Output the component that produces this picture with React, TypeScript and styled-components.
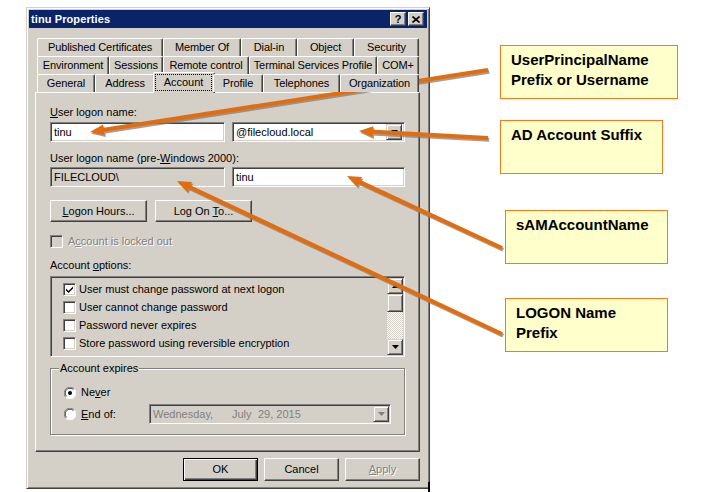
import React from "react";
import styled, { createGlobalStyle } from "styled-components";

const FACE = "#d4d0c8";
const SHADOW = "#808080";
const DARK = "#404040";

const Global = createGlobalStyle`
  html, body { margin: 0; padding: 0; background: #fff; }
  body { width: 718px; height: 492px; overflow: hidden; font-family: "Liberation Sans", Arial, sans-serif; }
  * { box-sizing: border-box; }
`;

const Page = styled.div`
  position: relative;
  width: 718px;
  height: 492px;
  display: flex;
  align-items: flex-start;
`;

const Window = styled.div`
  margin: 7px 0 0 26px;
  width: 404px;
  height: 482px;
  background: ${FACE};
  border: 1px solid;
  border-color: ${FACE} ${DARK} ${DARK} ${FACE};
  box-shadow: inset 1px 1px #fff, inset -1px -1px ${SHADOW};
  padding: 2px;
  display: flex;
  flex-direction: column;
  font: 11px "Liberation Sans", Arial, sans-serif;
  color: #000;
`;

const TitleBar = styled.div`
  height: 18px;
  background: #0a246a;
  color: #fff;
  display: flex;
  align-items: center;
  padding: 0 3px 0 2px;
`;

const TitleText = styled.div`
  flex: 1;
  font-weight: bold;
  font-size: 11px;
  letter-spacing: 0.1px;
`;

const CaptionButton = styled.div<{ $gap?: number }>`
  width: 16px;
  height: 14px;
  margin-left: ${(p) => p.$gap ?? 0}px;
  background: ${FACE};
  border: 1px solid;
  border-color: #fff ${DARK} ${DARK} #fff;
  box-shadow: inset -1px -1px ${SHADOW};
  display: flex;
  align-items: center;
  justify-content: center;
  color: #000;
  font-weight: bold;
  font-size: 11px;
  line-height: 12px;
`;

const Content = styled.div`
  flex: 1;
  display: flex;
  flex-direction: column;
  padding: 10px 7px 0 6px;
`;

const TabStrip = styled.div`
  position: relative;
  z-index: 1;
  display: flex;
  flex-direction: column;
  margin: 0 1px 0 2px;
`;

const TabRow = styled.div`
  display: flex;
  height: 18px;
`;

const Tab = styled.div<{ $w: number }>`
  flex: none;
  width: ${(p) => p.$w}px;
  height: 18px;
  background: ${FACE};
  border-top: 1px solid #fff;
  border-left: 1px solid #fff;
  border-right: 1px solid ${DARK};
  border-top-left-radius: 2px;
  border-top-right-radius: 2px;
  box-shadow: inset -1px 0 ${SHADOW};
  display: flex;
  align-items: center;
  justify-content: center;
  white-space: nowrap;
  overflow: hidden;
  line-height: 13px;
  letter-spacing: -0.1px;
`;

const ActiveTab = styled.div<{ $w: number }>`
  flex: none;
  width: ${(p) => p.$w + 4}px;
  height: 21px;
  margin: -2px -2px 0 -2px;
  background: ${FACE};
  border-top: 1px solid #fff;
  border-left: 1px solid #fff;
  border-right: 1px solid ${DARK};
  border-top-left-radius: 2px;
  border-top-right-radius: 2px;
  box-shadow: inset -1px 0 ${SHADOW};
  display: flex;
  padding: 1px 2px 2px 1px;
`;

const FocusRect = styled.div`
  flex: 1;
  border: 1px dotted #000;
  display: flex;
  align-items: center;
  justify-content: center;
  line-height: 13px;
`;

const Panel = styled.div`
  height: 360px;
  border: 1px solid;
  border-color: #fff ${DARK} ${DARK} #fff;
  box-shadow: inset -1px -1px ${SHADOW};
  padding: 13px 14px 0 14px;
  display: flex;
  flex-direction: column;
`;

const Label = styled.div<{ $mt?: number; $disabled?: boolean }>`
  margin-top: ${(p) => p.$mt ?? 0}px;
  height: 13px;
  line-height: 13px;
  white-space: nowrap;
  color: ${(p) => (p.$disabled ? SHADOW : "#000")};
  text-shadow: ${(p) => (p.$disabled ? "1px 1px #fff" : "none")};
`;

const FieldRow = styled.div<{ $mt: number }>`
  margin-top: ${(p) => p.$mt}px;
  display: flex;
  gap: 7px;
`;

const Field = styled.div<{ $w: number; $gray?: boolean; $disabled?: boolean }>`
  width: ${(p) => p.$w}px;
  height: 20px;
  background: ${(p) => (p.$gray ? FACE : "#fff")};
  border: 1px solid;
  border-color: ${SHADOW} #fff #fff ${SHADOW};
  box-shadow: inset 1px 1px ${DARK}, inset -1px -1px ${FACE};
  padding: 0 2px 0 3px;
  display: flex;
  align-items: center;
  white-space: nowrap;
  color: ${(p) => (p.$disabled ? SHADOW : "#000")};
  line-height: 13px;
`;

const FieldText = styled.span`
  flex: 1;
`;

const DropButton = styled.div`
  width: 16px;
  height: 16px;
  flex: none;
  background: ${FACE};
  border: 1px solid;
  border-color: ${FACE} ${DARK} ${DARK} ${FACE};
  box-shadow: inset 1px 1px #fff, inset -1px -1px ${SHADOW};
  display: flex;
  align-items: center;
  justify-content: center;
`;

const ButtonRow = styled.div<{ $mt: number; $end?: boolean; $gap: number }>`
  margin-top: ${(p) => p.$mt}px;
  display: flex;
  gap: ${(p) => p.$gap}px;
  justify-content: ${(p) => (p.$end ? "flex-end" : "flex-start")};
`;

const Button = styled.div<{ $w: number; $h?: number; $default?: boolean; $disabled?: boolean }>`
  width: ${(p) => p.$w}px;
  height: ${(p) => p.$h ?? 22}px;
  background: ${FACE};
  border: 1px solid;
  border-color: ${(p) => (p.$default ? "#000" : `#fff ${DARK} ${DARK} #fff`)};
  box-shadow: ${(p) =>
    p.$default
      ? `inset 1px 1px #fff, inset -1px -1px ${DARK}, inset -2px -2px ${SHADOW}`
      : `inset -1px -1px ${SHADOW}`};
  display: flex;
  align-items: center;
  justify-content: center;
  white-space: nowrap;
  line-height: 13px;
  color: ${(p) => (p.$disabled ? SHADOW : "#000")};
  text-shadow: ${(p) => (p.$disabled ? "1px 1px #fff" : "none")};
`;

const CheckRow = styled.div<{ $mt?: number; $h?: number; $gap?: number }>`
  margin-top: ${(p) => p.$mt ?? 0}px;
  height: ${(p) => p.$h ?? 13}px;
  display: flex;
  align-items: center;
  gap: ${(p) => p.$gap ?? 4}px;
  white-space: nowrap;
  line-height: 13px;
`;

const CheckBox = styled.div<{ $disabled?: boolean }>`
  width: 13px;
  height: 13px;
  flex: none;
  background: ${(p) => (p.$disabled ? FACE : "#fff")};
  border: 1px solid;
  border-color: ${SHADOW} #fff #fff ${SHADOW};
  box-shadow: inset 1px 1px ${DARK}, inset -1px -1px ${FACE};
  display: flex;
  align-items: center;
  justify-content: center;
`;

const DisabledText = styled.span`
  color: ${SHADOW};
  text-shadow: 1px 1px #fff;
`;

const ListBox = styled.div`
  margin-top: 4px;
  height: 81px;
  background: ${FACE};
  border: 1px solid;
  border-color: ${SHADOW} #fff #fff ${SHADOW};
  box-shadow: inset 1px 1px ${DARK}, inset -1px -1px ${FACE};
  padding: 1px;
  display: flex;
`;

const ListItems = styled.div`
  flex: 1;
  padding: 2px 0 0 11px;
  display: flex;
  flex-direction: column;
`;

const ScrollBar = styled.div`
  width: 16px;
  display: flex;
  flex-direction: column;
`;

const ScrollButton = styled.div<{ $h: number }>`
  height: ${(p) => p.$h}px;
  background: ${FACE};
  border: 1px solid;
  border-color: ${FACE} ${DARK} ${DARK} ${FACE};
  box-shadow: inset 1px 1px #fff, inset -1px -1px ${SHADOW};
  display: flex;
  align-items: center;
  justify-content: center;
`;

const ScrollTrack = styled.div`
  flex: 1;
  background-color: #fff;
  background-image: conic-gradient(${FACE} 25%, #fff 0 50%, ${FACE} 0 75%, #fff 0);
  background-size: 2px 2px;
`;

const GroupBox = styled.div`
  margin-top: 11px;
  height: 67px;
  border: 1px solid ${SHADOW};
  box-shadow: inset 1px 1px #fff, 1px 1px #fff;
  padding: 0 13px;
  display: flex;
  flex-direction: column;
`;

const Legend = styled.span`
  align-self: flex-start;
  margin: -7px 0 0 -5px;
  padding: 0 1px;
  background: ${FACE};
  line-height: 13px;
  height: 13px;
`;

const Radio = styled.div`
  width: 12px;
  height: 12px;
  flex: none;
`;

const DateField = styled(Field)`
  margin-left: auto;
  padding: 0 1px 0 3px;
`;

const DateSeg = styled.span<{ $w?: number }>`
  display: inline-block;
  width: ${(p) => (p.$w ? `${p.$w}px` : "auto")};
`;

const Annotations = styled.div`
  margin-left: 70px;
  display: flex;
  flex-direction: column;
`;

const Callout = styled.div<{ $mt: number; $ml: number; $w: number }>`
  margin-top: ${(p) => p.$mt}px;
  margin-left: ${(p) => p.$ml}px;
  width: ${(p) => p.$w}px;
  height: 54px;
  background: #ffffcc;
  border: 1px solid #f47a20;
  padding: 4px 8px 0 10px;
  font: bold 15px/20px "Liberation Sans", Arial, sans-serif;
  color: #000;
  white-space: pre-line;
`;

const Overlay = styled.svg`
  position: absolute;
  left: 0;
  top: 0;
  width: 718px;
  height: 492px;
  pointer-events: none;
`;

const EdgeMark = styled.div`
  position: absolute;
  left: 428px;
  top: 482px;
  width: 2px;
  height: 10px;
  background: #000;
`;

const DownArrow = ({ color = "#000" }: { color?: string }) => (
  <svg width="7" height="4" viewBox="0 0 7 4">
    <path d="M0 0H7L3.5 4Z" fill={color} />
  </svg>
);
const UpArrow = () => (
  <svg width="7" height="4" viewBox="0 0 7 4">
    <path d="M0 4H7L3.5 0Z" fill="#000" />
  </svg>
);

const CheckMark = () => (
  <svg width="9" height="9" viewBox="0 0 9 9">
    <path d="M1 3.5L3.5 6L8 1.5V3.5L3.5 8L1 5.5Z" fill="#000" />
  </svg>
);

const RadioIcon = ({ checked }: { checked?: boolean }) => (
  <svg width="12" height="12" viewBox="0 0 12 12">
    <circle cx="6" cy="6" r="5.5" fill="#fff" />
    <path d="M10.2 1.8A5.5 5.5 0 0 0 1.8 10.2" stroke={SHADOW} fill="none" />
    <path d="M9.4 2.6A4.5 4.5 0 0 0 2.6 9.4" stroke={DARK} fill="none" />
    <path d="M1.8 10.2A5.5 5.5 0 0 0 10.2 1.8" stroke="#fff" fill="none" />
    {checked && <circle cx="6" cy="6" r="2" fill="#000" />}
  </svg>
);

const CloseGlyph = () => (
  <svg width="8" height="7" viewBox="0 0 8 7">
    <path d="M0.5 0.5L7.5 6.5M7.5 0.5L0.5 6.5" stroke="#000" strokeWidth="1.6" />
  </svg>
);

type ArrowSpec = { x1: number; y1: number; x2: number; y2: number };
const ARROWS: ArrowSpec[] = [
  { x1: 488, y1: 70, x2: 90, y2: 132 },
  { x1: 488, y1: 138, x2: 359, y2: 131 },
  { x1: 502, y1: 248, x2: 347, y2: 176 },
  { x1: 502, y1: 334, x2: 177, y2: 181 },
];

const Arrow = ({ a }: { a: ArrowSpec }) => {
  const dx = a.x2 - a.x1;
  const dy = a.y2 - a.y1;
  const len = Math.hypot(dx, dy);
  const ux = dx / len;
  const uy = dy / len;
  const nx = -uy;
  const ny = ux;
  const hl = 14;
  const hw = 5.5;
  const bx = a.x2 - ux * hl;
  const by = a.y2 - uy * hl;
  const pts = `${a.x2},${a.y2} ${bx + nx * hw},${by + ny * hw} ${bx - nx * hw},${by - ny * hw}`;
  const lx = bx + ux * 3;
  const ly = by + uy * 3;
  return (
    <g>
      <g transform="translate(1.2,1.8)" opacity="0.75">
        <line x1={a.x1} y1={a.y1} x2={lx} y2={ly} stroke="#7f7f7f" strokeWidth="4" />
        <polygon points={pts} fill="#7f7f7f" />
      </g>
      <line x1={a.x1} y1={a.y1} x2={lx} y2={ly} stroke="#e46c0a" strokeWidth="4" />
      <polygon points={pts} fill="#e46c0a" />
    </g>
  );
};

const row1: [string, number][] = [
  ["Published Certificates", 126],
  ["Member Of", 78],
  ["Dial-in", 56],
  ["Object", 57],
  ["Security", 65],
];
const row2: [string, number][] = [
  ["Environment", 72],
  ["Sessions", 54],
  ["Remote control", 86],
  ["Terminal Services Profile", 128],
  ["COM+", 42],
];

const options = [
  { text: "User must change password at next logon", checked: true },
  { text: "User cannot change password", checked: false },
  { text: "Password never expires", checked: false },
  { text: "Store password using reversible encryption", checked: false },
];

export default function App() {
  return (
    <Page>
      <Global />
      <Window>
        <TitleBar>
          <TitleText>tinu Properties</TitleText>
          <CaptionButton>?</CaptionButton>
          <CaptionButton $gap={2}>
            <CloseGlyph />
          </CaptionButton>
        </TitleBar>
        <Content>
          <TabStrip>
            <TabRow>
              {row1.map(([t, w]) => (
                <Tab key={t} $w={w}>
                  {t}
                </Tab>
              ))}
            </TabRow>
            <TabRow>
              {row2.map(([t, w]) => (
                <Tab key={t} $w={w}>
                  {t}
                </Tab>
              ))}
            </TabRow>
            <TabRow>
              <Tab $w={58}>General</Tab>
              <Tab $w={60}>Address</Tab>
              <ActiveTab $w={58}>
                <FocusRect>Account</FocusRect>
              </ActiveTab>
              <Tab $w={50}>Profile</Tab>
              <Tab $w={77}>Telephones</Tab>
              <Tab $w={79}>Organization</Tab>
            </TabRow>
          </TabStrip>
          <Panel>
            <Label>
              <u>U</u>ser logon name:
            </Label>
            <FieldRow $mt={3}>
              <Field $w={175}>tinu</Field>
              <Field $w={173}>
                <FieldText>@filecloud.local</FieldText>
                <DropButton>
                  <DownArrow />
                </DropButton>
              </Field>
            </FieldRow>
            <Label $mt={10}>
              User logon name (pre-<u>W</u>indows 2000):
            </Label>
            <FieldRow $mt={2}>
              <Field $w={175} $gray>
                FILECLOUD\
              </Field>
              <Field $w={173}>tinu</Field>
            </FieldRow>
            <ButtonRow $mt={13} $gap={8}>
              <Button $w={97}>
                <span>
                  <u>L</u>ogon Hours...
                </span>
              </Button>
              <Button $w={97}>
                <span>
                  Log On <u>T</u>o...
                </span>
              </Button>
            </ButtonRow>
            <CheckRow $mt={13} $gap={5}>
              <CheckBox $disabled />
              <DisabledText>
                A<u>c</u>count is locked out
              </DisabledText>
            </CheckRow>
            <Label $mt={11}>
              Account <u>o</u>ptions:
            </Label>
            <ListBox>
              <ListItems>
                {options.map((o) => (
                  <CheckRow key={o.text} $h={18} $gap={3}>
                    <CheckBox>{o.checked && <CheckMark />}</CheckBox>
                    <span>{o.text}</span>
                  </CheckRow>
                ))}
              </ListItems>
              <ScrollBar>
                <ScrollButton $h={16}>
                  <UpArrow />
                </ScrollButton>
                <ScrollButton $h={18} />
                <ScrollTrack />
                <ScrollButton $h={16}>
                  <DownArrow />
                </ScrollButton>
              </ScrollBar>
            </ListBox>
            <GroupBox>
              <Legend>Account expires</Legend>
              <CheckRow $mt={11} $gap={5}>
                <Radio>
                  <RadioIcon checked />
                </Radio>
                <span>
                  Ne<u>v</u>er
                </span>
              </CheckRow>
              <CheckRow $mt={5} $h={20} $gap={5}>
                <Radio>
                  <RadioIcon />
                </Radio>
                <span>
                  <u>E</u>nd of:
                </span>
                <DateField $w={242} $gray $disabled>
                  <FieldText>
                    <DateSeg $w={79}>Wednesday,</DateSeg>
                    <DateSeg $w={26}>July</DateSeg>
                    <DateSeg>29, 2015</DateSeg>
                  </FieldText>
                  <DropButton>
                    <DownArrow color={SHADOW} />
                  </DropButton>
                </DateField>
              </CheckRow>
            </GroupBox>
          </Panel>
          <ButtonRow $mt={6} $gap={6} $end>
            <Button $w={75} $h={23} $default>
              OK
            </Button>
            <Button $w={75} $h={23}>
              Cancel
            </Button>
            <Button $w={75} $h={23} $disabled>
              <span>
                <u>A</u>pply
              </span>
            </Button>
          </ButtonRow>
        </Content>
      </Window>
      <Annotations>
        <Callout $mt={45} $ml={0} $w={178}>
          {"UserPrincipalName\nPrefix or Username"}
        </Callout>
        <Callout $mt={21} $ml={0} $w={163}>
          AD Account Suffix
        </Callout>
        <Callout $mt={36} $ml={5} $w={163}>
          sAMAccountName
        </Callout>
        <Callout $mt={34} $ml={5} $w={163}>
          {"LOGON Name\nPrefix"}
        </Callout>
      </Annotations>
      <EdgeMark />
      <Overlay viewBox="0 0 718 492">
        {ARROWS.map((a, i) => (
          <Arrow key={i} a={a} />
        ))}
      </Overlay>
    </Page>
  );
}
